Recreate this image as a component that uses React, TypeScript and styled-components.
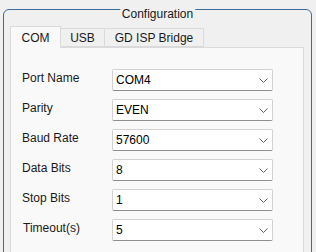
import React, { useState } from 'react';
import styled, { createGlobalStyle } from 'styled-components';

const GlobalStyle = createGlobalStyle`
  html, body {
    margin: 0;
    padding: 0;
    background-color: #f0f0f0;
    font-family: "Liberation Sans", Arial, sans-serif;
    font-size: 12px;
    color: #1a1a1a;
    overflow: hidden;
  }
`;

// the dialog is cut off at the bottom of the window
const Viewport = styled.div`
  height: 252px;
  overflow: hidden;
`;

const GroupBox = styled.div`
  position: relative;
  box-sizing: border-box;
  width: 309px;
  height: 260px;
  margin: 9px 0 0 3px;
  padding: 16px 7px 0 6px;
  border: 1px solid #3a6e9b; /* blue frame */
  border-radius: 6px;
`;

const GroupTitle = styled.div`
  position: absolute;
  top: -3px;
  left: 50%;
  transform: translateX(-50%);
  padding: 0 2px;
  line-height: 14px;
  background-color: #f0f0f0;
  color: #1a1a1a;
  white-space: nowrap;
`;

const TabBar = styled.div`
  display: flex;
  align-items: flex-end;
  height: 21px;
`;

const Tab = styled.div<{ $active: boolean; $width: number }>`
  box-sizing: border-box;
  width: ${(p) => p.$width}px;
  height: ${(p) => (p.$active ? 22 : 19)}px;
  margin-bottom: ${(p) => (p.$active ? -1 : 0)}px;
  padding-top: ${(p) => (p.$active ? 4 : 2)}px;
  position: relative;
  z-index: ${(p) => (p.$active ? 1 : 0)};
  border: 1px solid #dadada;
  border-bottom: ${(p) => (p.$active ? 'none' : '1px solid #dadada')};
  border-left: ${(p) => (p.$active ? '1px solid #dadada' : 'none')};
  background-color: ${(p) => (p.$active ? '#f9f9f9' : '#f0f0f0')};
  line-height: 14px;
  text-align: center;
  white-space: nowrap;
  cursor: default;
`;

const Pane = styled.div`
  box-sizing: border-box;
  width: 294px;
  height: 210px;
  padding: 21px 0 0 11px;
  border: 1px solid #dadada;
  background-color: #f9f9f9;
  display: grid;
  grid-template-columns: 90px 161px;
  grid-auto-rows: 22px;
  row-gap: 8px;
  align-content: start;
`;

const Label = styled.div<{ $shift?: number }>`
  margin-top: 2px;
  padding-left: ${(p) => p.$shift || 0}px;
  line-height: 14px;
  white-space: nowrap;
`;

const Combo = styled.div`
  box-sizing: border-box;
  height: 22px;
  display: flex;
  align-items: center;
  justify-content: space-between;
  padding: 1px 4px 0 3px;
  border: 1px solid #d2d2d2;
  border-bottom-color: #8f8f8f;
  border-radius: 2px;
  background-color: #ffffff;
  color: #000000;
  line-height: 19px;
`;

const Chevron = styled.svg`
  margin-top: 1px;
  flex: none;
`;

const tabs = [
  { name: 'COM', width: 51 },
  { name: 'USB', width: 44 },
  { name: 'GD ISP Bridge', width: 99 },
];

const fields = [
  { label: 'Port Name', value: 'COM4' },
  { label: 'Parity', value: 'EVEN' },
  { label: 'Baud Rate', value: '57600' },
  { label: 'Data Bits', value: '8' },
  { label: 'Stop Bits', value: '1' },
  { label: 'Timeout(s)', value: '5', shift: 1 },
];

const ChevronDown = () => (
  <Chevron width="9" height="6" viewBox="0 0 9 6">
    <path d="M0.5 0.5 L4.5 4.5 L8.5 0.5" fill="none" stroke="#606060" strokeWidth="1" />
  </Chevron>
);

const App: React.FC = () => {
  const [active, setActive] = useState('COM');

  return (
    <Viewport>
      <GlobalStyle />
      <GroupBox>
        <GroupTitle>Configuration</GroupTitle>
        <TabBar>
          {tabs.map((t) => (
            <Tab
              key={t.name}
              $active={active === t.name}
              $width={t.width}
              onClick={() => setActive(t.name)}
            >
              {t.name}
            </Tab>
          ))}
        </TabBar>
        <Pane>
          {fields.map((f) => (
            <React.Fragment key={f.label}>
              <Label $shift={f.shift}>{f.label}</Label>
              <Combo>
                <span>{f.value}</span>
                <ChevronDown />
              </Combo>
            </React.Fragment>
          ))}
        </Pane>
      </GroupBox>
    </Viewport>
  );
};

export default App;
